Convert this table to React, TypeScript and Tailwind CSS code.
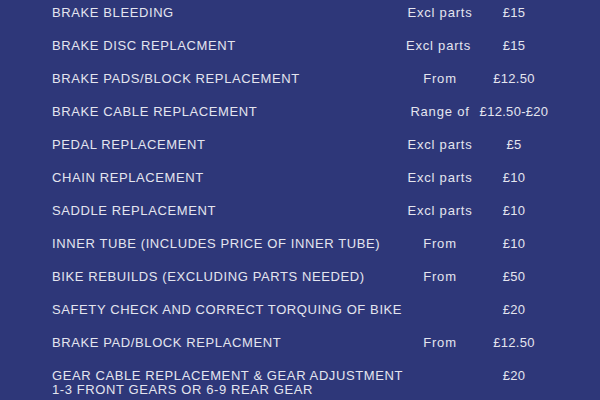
const rows: { label: string[]; note: string; price: string; shift?: boolean }[] = [
  { label: ['BRAKE BLEEDING'], note: 'Excl parts', price: '£15' },
  { label: ['BRAKE DISC REPLACMENT'], note: 'Excl parts', price: '£15', shift: true },
  { label: ['BRAKE PADS/BLOCK REPLACEMENT'], note: 'From', price: '£12.50' },
  { label: ['BRAKE CABLE REPLACEMENT'], note: 'Range of', price: '£12.50-£20' },
  { label: ['PEDAL REPLACEMENT'], note: 'Excl parts', price: '£5' },
  { label: ['CHAIN REPLACEMENT'], note: 'Excl parts', price: '£10' },
  { label: ['SADDLE REPLACEMENT'], note: 'Excl parts', price: '£10' },
  { label: ['INNER TUBE (INCLUDES PRICE OF INNER TUBE)'], note: 'From', price: '£10' },
  { label: ['BIKE REBUILDS (EXCLUDING PARTS NEEDED)'], note: 'From', price: '£50' },
  { label: ['SAFETY CHECK AND CORRECT TORQUING OF BIKE'], note: '', price: '£20' },
  { label: ['BRAKE PAD/BLOCK REPLACMENT'], note: 'From', price: '£12.50' },
  {
    label: ['GEAR CABLE REPLACEMENT & GEAR ADJUSTMENT', '1-3 FRONT GEARS OR 6-9 REAR GEAR'],
    note: '',
    price: '£20',
  },
];

export default function App() {
  return (
    <div className="w-[600px] h-[400px] overflow-hidden bg-[#2e3779] text-[#e4e5ef] font-['Liberation_Sans',Arial,sans-serif]">
      <div className="flex flex-col gap-[19px] pt-[6px] pl-[52px]">
        {rows.map((r, i) => (
          <div key={i} className="grid grid-cols-[345px_86px_62px] items-start text-[13px] leading-[14px]">
            <div className="tracking-[0.6px]">
              {r.label.map((l) => (
                <div key={l} className="whitespace-nowrap">{l}</div>
              ))}
            </div>
            <div className={`flex justify-center tracking-[0.8px] whitespace-nowrap ${r.shift ? '-ml-[3px]' : ''}`}>
              {r.note}
            </div>
            <div className="flex justify-center tracking-[0.3px] whitespace-nowrap">{r.price}</div>
          </div>
        ))}
      </div>
    </div>
  );
}
